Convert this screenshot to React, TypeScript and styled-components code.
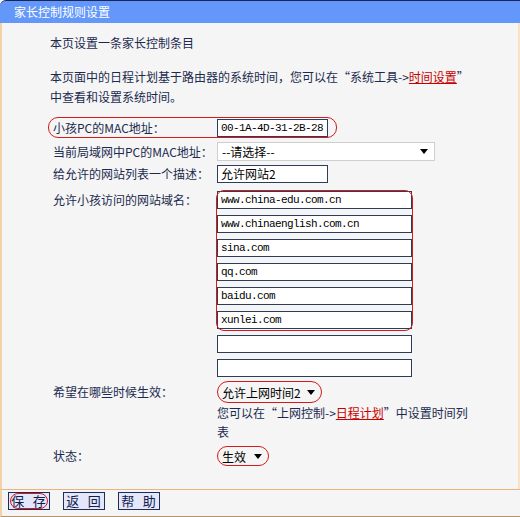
import React from "react";
import styled, { createGlobalStyle } from "styled-components";

const GlobalStyle = createGlobalStyle`
  html, body {
    margin: 0;
    padding: 0;
    background: #f5f5f5;
  }
  body {
    font-family: "Noto Sans CJK SC", "Noto Sans", sans-serif;
    font-size: 12px;
    color: #1b2a4e;
  }
`;

const Frame = styled.div`
  width: 520px;
  height: 517px;
  display: flex;
  flex-direction: column;
  background: #f5f5f5;
`;

const TitleBar = styled.div`
  height: 22px;
  border-top: 1px solid #1c2652;
  border-top-left-radius: 6px;
  background: #6398fa;
  color: #ffffff;
  font-size: 12px;
  line-height: 22px;
  padding-left: 14px;
`;

const Body = styled.div`
  flex: 1;
  border-left: 2px solid #f3d2a8;
  border-right: 2px solid #f8e2c6;
  padding-left: 48px;
`;

const Heading = styled.div`
  margin-top: 10px;
  line-height: 20px;
`;

const Note = styled.div`
  margin-top: 14px;
  line-height: 20px;
  white-space: nowrap;
`;

const Link = styled.span`
  color: #c80000;
  text-decoration: underline;
`;

const Form = styled.div`
  margin-top: 10px;
  display: flex;
  flex-direction: column;
`;

const Row = styled.div<{ $pt: number; $ring?: boolean }>`
  position: relative;
  display: flex;
  align-items: flex-start;
  padding-top: ${(p) => p.$pt}px;

  ${(p) =>
    p.$ring &&
    `
    &::after {
      content: "";
      position: absolute;
      left: -2px;
      top: 0px;
      width: 289px;
      height: 21px;
      border: 1px solid #d41a1a;
      border-radius: 10px;
      box-sizing: border-box;
      pointer-events: none;
    }
  `}
`;

const Label = styled.div<{ $lh: number }>`
  width: 167px;
  padding-left: 3px;
  box-sizing: border-box;
  line-height: ${(p) => p.$lh}px;
  white-space: nowrap;
`;

const Field = styled.div`
  display: flex;
  flex-direction: column;
`;

const Input = styled.div<{ $w: number; $cjk?: boolean }>`
  width: ${(p) => p.$w}px;
  height: 18px;
  box-sizing: border-box;
  border: 1px solid #2c3d5c;
  background: #ffffff;
  color: #000000;
  padding-left: 3px;
  line-height: 16px;
  white-space: nowrap;
  overflow: hidden;
  font-family: ${(p) =>
    p.$cjk ? `"Noto Sans CJK SC", sans-serif` : `"Liberation Mono", monospace`};
  font-size: ${(p) => (p.$cjk ? 12 : 11)}px;
  letter-spacing: ${(p) => (p.$cjk ? 0 : -0.6)}px;
`;

const DomainList = styled.div`
  display: flex;
  flex-direction: column;
  gap: 6px;
`;

const RingGroup = styled.div`
  position: relative;
  display: flex;
  flex-direction: column;
  gap: 6px;

  &::after {
    content: "";
    position: absolute;
    left: -1px;
    top: -1px;
    right: -1px;
    bottom: -2px;
    border: 1px solid #d41a1a;
    border-radius: 8px;
    pointer-events: none;
  }
`;

const Select = styled.div<{ $w: number; $h: number; $ring?: boolean }>`
  width: ${(p) => p.$w}px;
  height: ${(p) => p.$h}px;
  box-sizing: border-box;
  display: flex;
  align-items: center;
  justify-content: space-between;
  padding: 0 6px 0 4px;
  color: #000000;
  white-space: nowrap;
  background: ${(p) => (p.$ring ? "transparent" : "#ffffff")};
  border: 1px solid ${(p) => (p.$ring ? "#d41a1a" : "#cfcfcf")};
  border-radius: ${(p) => (p.$ring ? `${p.$h / 2}px` : "0")};
`;

const Hint = styled.div`
  line-height: 19px;
  width: 300px;
`;

const Footer = styled.div`
  height: 24px;
  border-top: 1px solid #e8b57c;
  border-bottom: 1px solid #b39468;
  border-left: 2px solid #f3d2a8;
  display: flex;
  align-items: flex-start;
  gap: 13px;
  padding: 2px 0 0 6px;
  box-sizing: content-box;
`;

const Button = styled.div<{ $ring?: boolean }>`
  position: relative;
  width: 42px;
  height: 18px;
  box-sizing: border-box;
  border: 1px solid #1e2c58;
  background: #e4e6fa;
  color: #10204a;
  font-size: 13px;
  line-height: 16px;
  text-align: center;
  white-space: pre;
  letter-spacing: 1px;

  ${(p) =>
    p.$ring &&
    `
    &::after {
      content: "";
      position: absolute;
      inset: 0 1px;
      border: 1px solid #d41a1a;
      border-radius: 9px;
    }
  `}
`;

const Caret = () => (
  <svg width="8" height="5" viewBox="0 0 8 5">
    <path d="M0 0 L8 0 L4 5 Z" fill="#000" />
  </svg>
);

const domains = [
  "www.china-edu.com.cn",
  "www.chinaenglish.com.cn",
  "sina.com",
  "qq.com",
  "baidu.com",
  "xunlei.com",
];

export default function App() {
  return (
    <>
      <GlobalStyle />
      <Frame>
        <TitleBar>家长控制规则设置</TitleBar>
        <Body>
          <Heading>本页设置一条家长控制条目</Heading>
          <Note>
            本页面中的日程计划基于路由器的系统时间，您可以在“系统工具-&gt;
            <Link>时间设置</Link>”
            <br />
            中查看和设置系统时间。
          </Note>
          <Form>
            <Row $pt={2} $ring>
              <Label $lh={18}>小孩PC的MAC地址：</Label>
              <Input $w={111}>00-1A-4D-31-2B-28</Input>
            </Row>
            <Row $pt={5}>
              <Label $lh={19}>当前局域网中PC的MAC地址：</Label>
              <Select $w={218} $h={19}>
                --请选择--
                <Caret />
              </Select>
            </Row>
            <Row $pt={4}>
              <Label $lh={18}>给允许的网站列表一个描述：</Label>
              <Input $w={111} $cjk>
                允许网站2
              </Input>
            </Row>
            <Row $pt={8}>
              <Label $lh={18}>允许小孩访问的网站域名：</Label>
              <DomainList>
                <RingGroup>
                  {domains.map((d) => (
                    <Input key={d} $w={195}>
                      {d}
                    </Input>
                  ))}
                </RingGroup>
                <Input $w={195} />
                <Input $w={195} />
              </DomainList>
            </Row>
            <Row $pt={4}>
              <Label $lh={22}>希望在哪些时候生效：</Label>
              <Field>
                <Select $w={105} $h={22} $ring>
                  允许上网时间2
                  <Caret />
                </Select>
                <Hint>
                  您可以在“上网控制-&gt;<Link>日程计划</Link>”中设置时间列
                  <br />表
                </Hint>
              </Field>
            </Row>
            <Row $pt={5}>
              <Label $lh={20}>状态：</Label>
              <Select $w={52} $h={20} $ring>
                生效
                <Caret />
              </Select>
            </Row>
          </Form>
        </Body>
        <Footer>
          <Button $ring>{"保\u2002存"}</Button>
          <Button>{"返\u2002回"}</Button>
          <Button>{"帮\u2002助"}</Button>
        </Footer>
      </Frame>
    </>
  );
}
